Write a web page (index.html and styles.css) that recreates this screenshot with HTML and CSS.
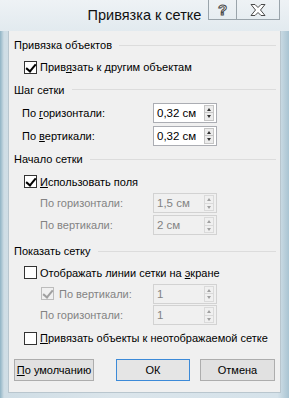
FILE: index.html
```html
<!DOCTYPE html>
<html lang="ru">
<head>
  <meta charset="UTF-8">
  <meta name="viewport" content="width=device-width, initial-scale=1.0">
  <title>Привязка к сетке</title>
  <link rel="stylesheet" href="styles.css">
</head>
<body>
<div class="window">
  <div class="titlebar">
    <div class="title">Привязка к сетке</div>
    <div class="caption-btn help">?</div>
    <div class="caption-btn close">
      <svg width="16" height="12" viewBox="0 0 16 12">
        <polygon points="1,0.5 5,0.5 8,3.5 11,0.5 15,0.5 10.5,6 15,11.5 11,11.5 8,8.5 5,11.5 1,11.5 5.5,6" fill="#fff" stroke="#4a4a4a" stroke-width="1"/>
      </svg>
    </div>
  </div>

  <div class="panel">
    <div class="group h1">Привязка объектов</div>
    <div class="check-row r22">
      <span class="box checked"></span>
      <span>Прив<u>я</u>зать к другим объектам</span>
    </div>

    <div class="group h23">Шаг сетки</div>
    <div class="field r23">
      <label class="lbl">По <u>г</u>оризонтали:</label>
      <div class="spin"><span class="val">0,32 см</span><span class="arrows"><i class="up"></i><i class="down"></i></span></div>
    </div>
    <div class="field r23">
      <label class="lbl">По <u>в</u>ертикали:</label>
      <div class="spin"><span class="val">0,32 см</span><span class="arrows"><i class="up"></i><i class="down"></i></span></div>
    </div>

    <div class="group h24">Начало сетки</div>
    <div class="check-row r21">
      <span class="box checked"></span>
      <span><u>И</u>спользовать поля</span>
    </div>
    <div class="field r22 off">
      <label class="lbl indent">По горизонтали:</label>
      <div class="spin"><span class="val">1,5 см</span><span class="arrows"><i class="up"></i><i class="down"></i></span></div>
    </div>
    <div class="field r22 off">
      <label class="lbl indent">По вертикали:</label>
      <div class="spin"><span class="val">2 см</span><span class="arrows"><i class="up"></i><i class="down"></i></span></div>
    </div>

    <div class="group h26">Показать сетку</div>
    <div class="check-row r21">
      <span class="box"></span>
      <span>Отображать линии сетки на <u>э</u>кране</span>
    </div>
    <div class="field r21 off">
      <div class="lbl-cb"><span class="box checked"></span><span>По вертикали:</span></div>
      <div class="spin"><span class="val">1</span><span class="arrows"><i class="up"></i><i class="down"></i></span></div>
    </div>
    <div class="field r22 off">
      <label class="lbl indent">По горизонтали:</label>
      <div class="spin"><span class="val">1</span><span class="arrows"><i class="up"></i><i class="down"></i></span></div>
    </div>
    <div class="check-row r24">
      <span class="box"></span>
      <span><u>П</u>ривязать объекты к неотображаемой сетке</span>
    </div>

    <div class="buttons">
      <button class="btn default"><u>П</u>о умолчанию</button>
      <button class="btn ok">ОК</button>
      <button class="btn cancel">Отмена</button>
    </div>
  </div>
</div>
</body>
</html>
```

FILE: styles.css
```css
body {
  margin: 0;
  font-family: "Liberation Sans", Arial, sans-serif;
  font-size: 11px;
  color: #000;
}

.window {
  width: 289px;
  height: 398px;
  background: linear-gradient(to right, #8fb3c4 0, #cfdde5 4px, #dbe5eb 40%, #d5e2ea 96%, #a9c4d2 100%);
  display: flex;
  flex-direction: column;
}

/* title bar */
.titlebar {
  height: 31px;
  position: relative;
  background: linear-gradient(to bottom, #eef2f5 0, #e2eaef 100%);
}

.title {
  position: absolute;
  left: 0;
  right: 0;
  top: 7px;
  text-align: center;
  font-size: 14.5px;
  color: #111;
}

.caption-btn {
  position: absolute;
  top: 0;
  height: 20px;
  border: 1px solid #9aa4ab;
  border-top: none;
  display: flex;
  align-items: center;
  justify-content: center;
  box-sizing: border-box;
}

.help {
  left: 208px;
  width: 28px;
  border-right: none;
  font-size: 15px;
  font-weight: bold;
  color: #fff;
  -webkit-text-stroke: 1px #4a4a4a;
}

.close {
  left: 236px;
  width: 44px;
}

/* dialog client area */
.panel {
  margin: 0 8px;
  height: 362px;
  background: #f0f0f0;
  border: 1px solid #b9c6ce;
  border-top: none;
  box-sizing: border-box;
  padding-top: 3px;
  white-space: nowrap;
}

.group {
  display: flex;
  align-items: center;
  padding-left: 5px;
  padding-right: 4px;
}

.group::after {
  content: "";
  flex: 1;
  height: 1px;
  background: #dcdcdc;
  margin-left: 7px;
}

.h1 { height: 22px; }
.h23 { height: 23px; }
.h24 { height: 24px; }
.h26 { height: 22px; padding-top: 4px; }

.r21 { height: 21px; }
.r22 { height: 22px; }
.r23 { height: 23px; }
.r24 { height: 24px; }

.check-row {
  display: flex;
  align-items: center;
  padding-left: 15px;
}

.box {
  width: 13px;
  height: 13px;
  box-sizing: border-box;
  border: 1px solid #333;
  background: #fff;
  margin-right: 3px;
  position: relative;
  flex: none;
}

.box.checked::after {
  content: "";
  position: absolute;
  left: 3px;
  top: 0px;
  width: 4px;
  height: 8px;
  border-right: 2px solid #000;
  border-bottom: 2px solid #000;
  transform: rotate(40deg);
}

.field {
  display: grid;
  grid-template-columns: 144px 64px;
  align-items: center;
}

.lbl {
  padding-left: 13px;
}

.lbl.indent { padding-left: 31px; }

.lbl-cb {
  display: flex;
  align-items: center;
  padding-left: 32px;
}

.spin {
  height: 20px;
  box-sizing: border-box;
  border: 1px solid #abadb3;
  background: #fff;
  display: flex;
  align-items: center;
  justify-content: space-between;
  padding: 0 2px 0 3px;
  font-size: 11.5px;
}

.arrows {
  width: 10px;
  height: 16px;
  box-sizing: border-box;
  border: 1px solid #c5c5c5;
  background: #ececec;
  display: flex;
  flex-direction: column;
}

.arrows i {
  flex: 1;
  position: relative;
}

.arrows .up { border-bottom: 1px solid #c5c5c5; }

.arrows i::after {
  content: "";
  position: absolute;
  left: 2px;
  top: 2px;
  border-left: 2px solid transparent;
  border-right: 2px solid transparent;
}

.arrows .up::after { border-bottom: 3px solid #333; }
.arrows .down::after { border-top: 3px solid #333; top: 2px; }

/* disabled rows */
.off { color: #838383; }
.off .spin { background: #f0f0f0; border-color: #d2d2d2; }
.off .arrows { border-color: #dadada; background: #f0f0f0; }
.off .arrows .up { border-bottom-color: #dadada; }
.off .arrows .up::after { border-bottom-color: #a0a0a0; }
.off .arrows .down::after { border-top-color: #a0a0a0; }
.off .box { border-color: #bcbcbc; background: #f0f0f0; margin-right: 5px; }
.off .box.checked::after { border-color: #a0a0a0; }

/* buttons */
.buttons {
  display: flex;
  padding: 9px 0 0 5px;
}

.btn {
  height: 22px;
  font-family: inherit;
  font-size: 11px;
  color: #000;
  background: #e1e1e1;
  border: 1px solid #adadad;
  padding: 0;
  white-space: nowrap;
}

.default { width: 80px; }
.ok { width: 74px; margin-left: 22px; border-color: #3c8ad8; background: #e5e5e5; }
.cancel { width: 75px; margin-left: 10px; }
```
